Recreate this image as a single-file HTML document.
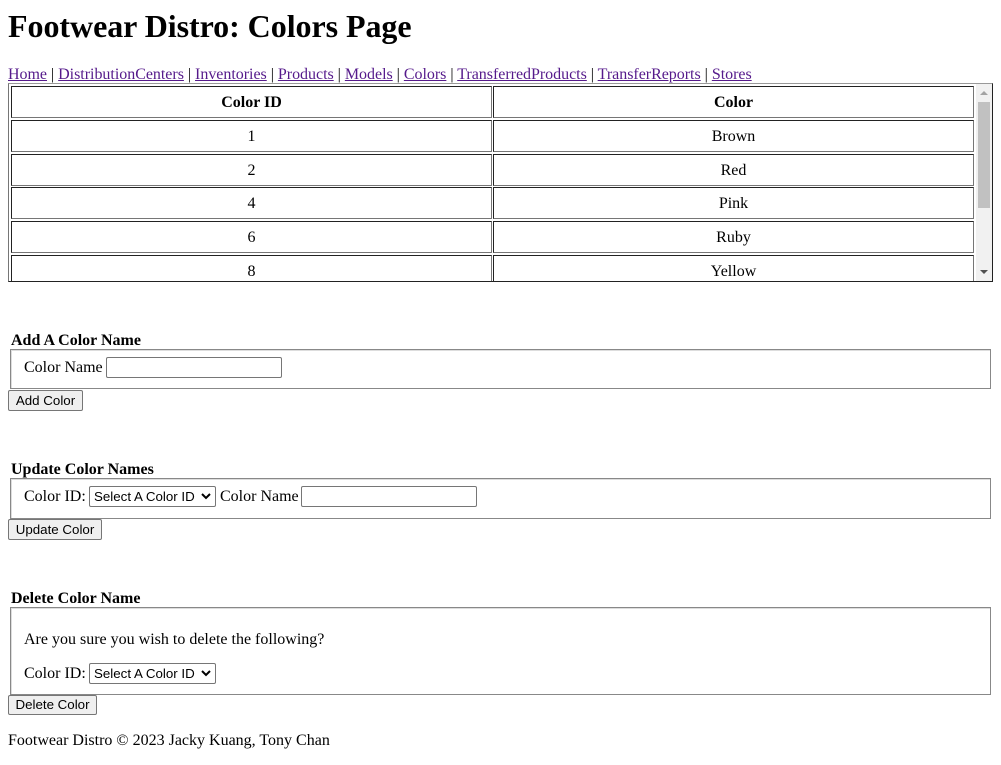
<!DOCTYPE html>
<html><head><meta charset="utf-8"><style>
body{margin:0;width:1001px;height:765px;position:relative;font-family:"Liberation Serif",serif;font-size:16px;color:#000;background:#fff;overflow:hidden}
.a{position:absolute;white-space:nowrap}
a{color:#551a8b;text-decoration:underline}
.cell{position:absolute;box-sizing:border-box;height:32px;border:1px solid #767676;border-top-color:#222;border-left-color:#222;text-align:center;line-height:31px;background:#fff}
.fs{position:absolute;box-sizing:border-box;left:10px;width:981px;border:1px solid #888;box-shadow:inset 1px 1px 0 #ddd}
.inp{position:absolute;box-sizing:border-box;height:21px;border:1px solid #767676;border-radius:2px;background:#fff}
.btn{position:absolute;box-sizing:border-box;height:21px;border:1px solid #767676;border-radius:2px;background:#efefef;font-family:"Liberation Sans",sans-serif;font-size:13.33px;line-height:19px;text-align:center}
.sel{position:absolute;box-sizing:border-box;height:21px;width:127px;border:1px solid #767676;border-radius:2px;background:#fff;font-family:"Liberation Sans",sans-serif;font-size:13.33px;line-height:19px;padding-left:4px}
.sel svg{position:absolute;right:4px;top:6px}
</style></head><body>
<div class="a" style="left:8px;top:8px;font-size:32px;font-weight:bold;line-height:37px;letter-spacing:-0.05px">Footwear Distro: Colors Page</div>
<div class="a" style="left:8px;top:66px;line-height:18px;letter-spacing:-0.025px"><a>Home</a> | <a>DistributionCenters</a> | <a>Inventories</a> | <a>Products</a> | <a>Models</a> | <a>Colors</a> | <a>TransferredProducts</a> | <a>TransferReports</a> | <a>Stores</a></div>

<div style="position:absolute;left:8px;top:83px;width:985px;height:199px;box-sizing:border-box;border:1px solid #767676;border-top-color:#999;border-bottom-color:#222;border-right-color:#222;overflow:hidden">
<div class="cell" style="left:2px;top:2px;width:481px;font-weight:bold">Color ID</div>
<div class="cell" style="left:484px;top:2px;width:481px;font-weight:bold">Color</div>
<div class="cell" style="left:2px;top:36px;width:481px">1</div><div class="cell" style="left:484px;top:36px;width:481px">Brown</div>
<div class="cell" style="left:2px;top:70px;width:481px">2</div><div class="cell" style="left:484px;top:70px;width:481px">Red</div>
<div class="cell" style="left:2px;top:103px;width:481px">4</div><div class="cell" style="left:484px;top:103px;width:481px">Pink</div>
<div class="cell" style="left:2px;top:137px;width:481px">6</div><div class="cell" style="left:484px;top:137px;width:481px">Ruby</div>
<div class="cell" style="left:2px;top:171px;width:481px">8</div><div class="cell" style="left:484px;top:171px;width:481px">Yellow</div>
<div style="position:absolute;left:967px;top:0;width:17px;height:197px;background:#f1f1f1"></div>
<div style="position:absolute;left:969px;top:18px;width:12px;height:106px;background:#c1c1c1"></div>
<div style="position:absolute;left:971px;top:7px;width:0;height:0;border:4px solid transparent;border-bottom-color:#a3a3a3;border-top:0"></div>
<div style="position:absolute;left:971px;top:186px;width:0;height:0;border:4px solid transparent;border-top-color:#505050;border-bottom:0"></div>
</div>

<div class="a" style="left:11px;top:332px;font-weight:bold;line-height:18px">Add A Color Name</div>
<div class="fs" style="top:349px;height:40px"></div>
<div class="a" style="left:24px;top:359px;line-height:18px">Color Name</div>
<div class="inp" style="left:106px;top:357px;width:176px"></div>
<div class="btn" style="left:8px;top:390px;width:75px">Add Color</div>

<div class="a" style="left:11px;top:461px;font-weight:bold;line-height:18px">Update Color Names</div>
<div class="fs" style="top:478px;height:41px"></div>
<div class="a" style="left:24px;top:488px;line-height:18px">Color ID:</div>
<div class="sel" style="left:89px;top:486px">Select A Color ID<svg width="10" height="7" viewBox="0 0 10 7"><path d="M1 1l4 4 4-4" stroke="#000" stroke-width="2" fill="none"/></svg></div>
<div class="a" style="left:220px;top:488px;line-height:18px">Color Name</div>
<div class="inp" style="left:301px;top:486px;width:176px"></div>
<div class="btn" style="left:8px;top:519px;width:94px">Update Color</div>

<div class="a" style="left:11px;top:590px;font-weight:bold;line-height:18px">Delete Color Name</div>
<div class="fs" style="top:607px;height:88px"></div>
<div class="a" style="left:24px;top:631px;line-height:18px">Are you sure you wish to delete the following?</div>
<div class="a" style="left:24px;top:665px;line-height:18px">Color ID:</div>
<div class="sel" style="left:89px;top:663px">Select A Color ID<svg width="10" height="7" viewBox="0 0 10 7"><path d="M1 1l4 4 4-4" stroke="#000" stroke-width="2" fill="none"/></svg></div>
<div class="btn" style="left:8px;top:695px;width:89px;height:20px;line-height:17px">Delete Color</div>

<div class="a" style="left:8px;top:732px;line-height:18px">Footwear Distro © 2023 Jacky Kuang, Tony Chan</div>
</body></html>
